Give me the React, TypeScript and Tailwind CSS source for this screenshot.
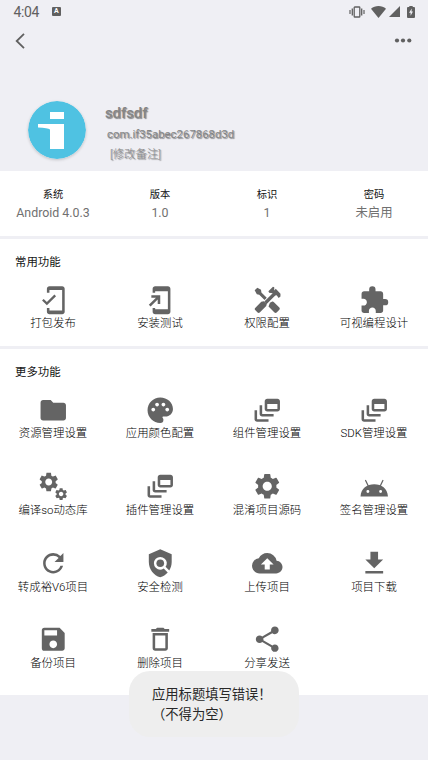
import type { ReactNode } from "react";
import {
  MdMobileFriendly,
  MdExtension,
  MdFolder,
  MdPalette,
  MdDynamicFeed,
  MdSettings,
  MdRefresh,
  MdPolicy,
  MdCloudUpload,
  MdFileDownload,
  MdSave,
  MdDeleteOutline,
  MdShare,
} from "react-icons/md";

const svg = (children: ReactNode) => (
  <svg viewBox="0 0 24 24" width="1em" height="1em" fill="currentColor">
    {children}
  </svg>
);

const gear =
  "M19.14 12.94c.04-.3.06-.61.06-.94 0-.32-.02-.64-.07-.94l2.03-1.58c.18-.14.23-.41.12-.61l-1.92-3.32c-.12-.22-.37-.29-.59-.22l-2.39.96c-.5-.38-1.03-.7-1.62-.94l-.36-2.54c-.04-.24-.24-.41-.48-.41h-3.84c-.24 0-.43.17-.47.41l-.36 2.54c-.59.24-1.13.57-1.62.94l-2.39-.96c-.22-.08-.47 0-.59.22L2.74 8.87c-.12.21-.08.47.12.61l2.03 1.58c-.05.3-.09.63-.09.94s.02.64.07.94l-2.03 1.58c-.18.14-.23.41-.12.61l1.92 3.32c.12.22.37.29.59.22l2.39-.96c.5.38 1.03.7 1.62.94l.36 2.54c.05.24.24.41.48.41h3.84c.24 0 .44-.17.47-.41l.36-2.54c.59-.24 1.13-.56 1.62-.94l2.39.96c.22.08.47 0 .59-.22l1.92-3.32c.12-.22.07-.47-.12-.61l-2.01-1.58zM12 15.6c-1.98 0-3.6-1.62-3.6-3.6s1.62-3.6 3.6-3.6 3.6 1.62 3.6 3.6-1.62 3.6-3.6 3.6z";

const Gears = () =>
  svg(
    <>
      <path d={gear} transform="translate(-.7 -.4) scale(.76)" />
      <path d={gear} transform="translate(12.3 12.3) scale(.49)" />
    </>
  );

const AddHome = () =>
  svg(
    <path d="M18 1.01 8 1c-1.1 0-2 .9-2 2v3h2V5h10v14H8v-1H6v3c0 1.1.9 2 2 2h10c1.1 0 2-.9 2-2V3c0-1.1-.9-1.99-2-1.99zM10 15h2V8H5v2h3.59L3 15.59 4.41 17 10 11.41V15z" />
  );

const HammerDriver = () =>
  svg(
    <>
      <path d="M2.1 4.2 4.2 2.1 7.1 3.8 7.4 5.9 11.6 10.1 9.9 11.8 5.7 7.6 3.8 7.2Z" />
      <path d="m14.1 14 1.5-.8c.7-.3 1.2-.1 1.7.4l4.2 4.2c.5.5.5 1.2 0 1.7l-2.1 2.1c-.5.5-1.2.5-1.7 0l-4.7-4.7Z" />
      <path d="m9.3 12.7 2.3 2.3-.4 1.5-5.1 5.1c-.5.5-1.2.5-1.7 0l-1.9-1.9c-.5-.5-.5-1.2 0-1.7l4.8-4.9Z" />
      <path d="m9.7 13 6.6-6.6-2.8-.4-.6-1.1L16.5 1.3l1 .4v2.7l1.2-1.5 3.7 3.9v2.2l-1.4 1.2-1.6-2.1-1.1.1-6.9 6.9Z" />
    </>
  );

const AndroidHead = () =>
  svg(
    <>
      <path d="M1.2 20c.5-6.4 5-9.5 10.8-9.5s10.3 3.1 10.8 9.500zM7 15a1.150 1.150 0 1 0 0 2.300 1.150 1.150 0 0 0 0-2.300zm10 0a1.150 1.150 0 1 0 0 2.300 1.150 1.150 0 0 0 0-2.300z" fillRule="evenodd" />
      <path d="M5.200 7.500 7.400 12M18.800 7.500 16.600 12" stroke="currentColor" strokeWidth="1" strokeLinecap="round" />
    </>
  );

type Item = { label: string; icon: ReactNode };

const common: Item[] = [
  { label: "打包发布", icon: <MdMobileFriendly /> },
  { label: "安装测试", icon: <AddHome /> },
  { label: "权限配置", icon: <HammerDriver /> },
  { label: "可视编程设计", icon: <MdExtension /> },
];

const more: Item[] = [
  { label: "资源管理设置", icon: <MdFolder /> },
  { label: "应用颜色配置", icon: <MdPalette /> },
  { label: "组件管理设置", icon: <MdDynamicFeed /> },
  { label: "SDK管理设置", icon: <MdDynamicFeed /> },
  { label: "编译so动态库", icon: <Gears /> },
  { label: "插件管理设置", icon: <MdDynamicFeed /> },
  { label: "混淆项目源码", icon: <MdSettings /> },
  { label: "签名管理设置", icon: <AndroidHead /> },
  { label: "转成裕V6项目", icon: <MdRefresh /> },
  { label: "安全检测", icon: <MdPolicy /> },
  { label: "上传项目", icon: <MdCloudUpload /> },
  { label: "项目下载", icon: <MdFileDownload /> },
  { label: "备份项目", icon: <MdSave /> },
  { label: "删除项目", icon: <MdDeleteOutline /> },
  { label: "分享发送", icon: <MdShare /> },
];

const info = [
  ["系统", "Android 4.0.3"],
  ["版本", "1.0"],
  ["标识", "1"],
  ["密码", "未启用"],
];

function Tile({ label, icon }: Item) {
  return (
    <div className="flex h-[76.6px] flex-col items-center">
      <div className="h-[30.5px] text-[30.5px] text-[#646464]">{icon}</div>
      <div className="h-4 pt-[0.4px] pr-px text-[11.4px] leading-4 font-light whitespace-nowrap text-black">{label}</div>
    </div>
  );
}

export default function App() {
  return (
    <div className="relative h-[760px] w-[428px] overflow-hidden bg-[#efeff4] font-[Roboto,'Noto_Sans_CJK_SC',sans-serif]">
      <header className="h-[171px] text-[#606060]">
        <div className="flex h-[23px] items-center pr-[13px] pl-[13.5px]">
          <span className="pt-px text-[14px] leading-[23px] tracking-[-0.4px]">4:04</span>
          <span className="ml-[13px] flex h-[9px] w-[9px] items-center justify-center rounded-[1px] bg-[#606060] text-[7px] leading-none font-bold text-white">A</span>
          <div className="ml-auto flex items-center">
            <svg width="16" height="12" viewBox="0 0 16 12" fill="none" stroke="currentColor">
              <rect x="5.2" y="1" width="5.6" height="10" rx=".6" strokeWidth="1.3" />
              <path d="M3.3 2.5v7M12.7 2.5v7" strokeWidth="1.3" />
              <path d="M1 4v4M15 4v4" strokeWidth="1.2" />
            </svg>
            <svg className="ml-[6px]" width="15" height="12" viewBox="0 0 15 12" fill="currentColor">
              <path d="M0 2.8C4-.8 11-.8 15 2.8L7.5 12z" />
            </svg>
            <svg className="ml-[3px]" width="11" height="11" viewBox="0 0 11 11" fill="currentColor">
              <path d="M11 0v11H0z" />
            </svg>
            <svg className="ml-[7px]" width="8" height="12" viewBox="0 0 8 12">
              <path d="M2.3 1V0h3.4v1H7q1 0 1 1v9q0 1-1 1H1q-1 0-1-1V2q0-1 1-1z" fill="#606060" />
              <path d="M4.8 2.5 2 6.8h1.600v3L6 5.600H4.500z" fill="#efeff4" />
            </svg>
          </div>
        </div>
        <div className="flex h-[35px] items-center justify-between pr-4 pl-[15px]">
          <svg width="10" height="16" viewBox="0 0 10 16" fill="none" stroke="currentColor" strokeWidth="1.8">
            <path d="M9 .9 1.7 8 9 15.1" />
          </svg>
          <svg width="18" height="5" viewBox="0 0 18 5" fill="currentColor">
            <circle cx="3" cy="2.5" r="2.1" />
            <circle cx="9" cy="2.5" r="2.1" />
            <circle cx="15.300" cy="2.5" r="2.1" />
          </svg>
        </div>
        <div className="flex pt-[43px] pl-7">
          <svg className="rounded-full shadow-[0_1px_3px_#00000030]" width="58" height="58" viewBox="0 0 58 58">
            <circle cx="29" cy="29" r="29" fill="#4fc2e2" />
            <path d="M22 11h14v7H22zM10 23h26v25H22V28.500Q20 27 10 26.500z" fill="white" />
          </svg>
          <div className="ml-[19px] text-[#858585] [text-shadow:1px_1px_1px_#00000070]">
            <div className="mt-[2px] text-[14.8px] leading-[20px] font-medium">sdfsdf</div>
            <div className="mt-[3px] ml-[2px] text-[11.4px] leading-4">com.if35abec267868d3d</div>
            <div className="mt-[4px] ml-[5px] text-[11.4px] leading-4 font-light">[修改备注]</div>
          </div>
        </div>
      </header>

      <main className="h-[524px] bg-white">
        <section className="grid h-[65px] grid-cols-4 pt-4 text-center">
          {info.map(([name, value]) => (
            <div key={name} className="pr-px">
              <div className="h-4 text-[10.3px] leading-4 text-[#111]">{name}</div>
              <div className="h-5 text-[12.4px] leading-5 text-[#707070]">{value}</div>
            </div>
          ))}
        </section>
        <div className="h-[3px] bg-[#efeff4]" />
        <section className="h-[107px] pt-[14px]">
          <h2 className="pl-[15px] text-[11.4px] leading-[18px] text-[#151515]">常用功能</h2>
          <div className="mt-[13.5px] grid grid-cols-4">
            {common.map((item) => (
              <Tile key={item.label} {...item} />
            ))}
          </div>
        </section>
        <div className="h-[3px] bg-[#efeff4]" />
        <section className="pt-[14px]">
          <h2 className="pl-[15px] text-[11.4px] leading-[18px] text-[#151515]">更多功能</h2>
          <div className="mt-[13.5px] grid grid-cols-4">
            {more.map((item) => (
              <Tile key={item.label} {...item} />
            ))}
          </div>
        </section>
      </main>

      <div className="absolute top-[671px] left-[129px] h-[66px] w-[170px] rounded-[21px] bg-[#eeeeee] pt-[14px] pl-[23px] text-[13.3px] leading-5 text-[#282828]">
        <div>应用标题填写错误！</div>
        <div>（不得为空）</div>
      </div>
    </div>
  );
}
